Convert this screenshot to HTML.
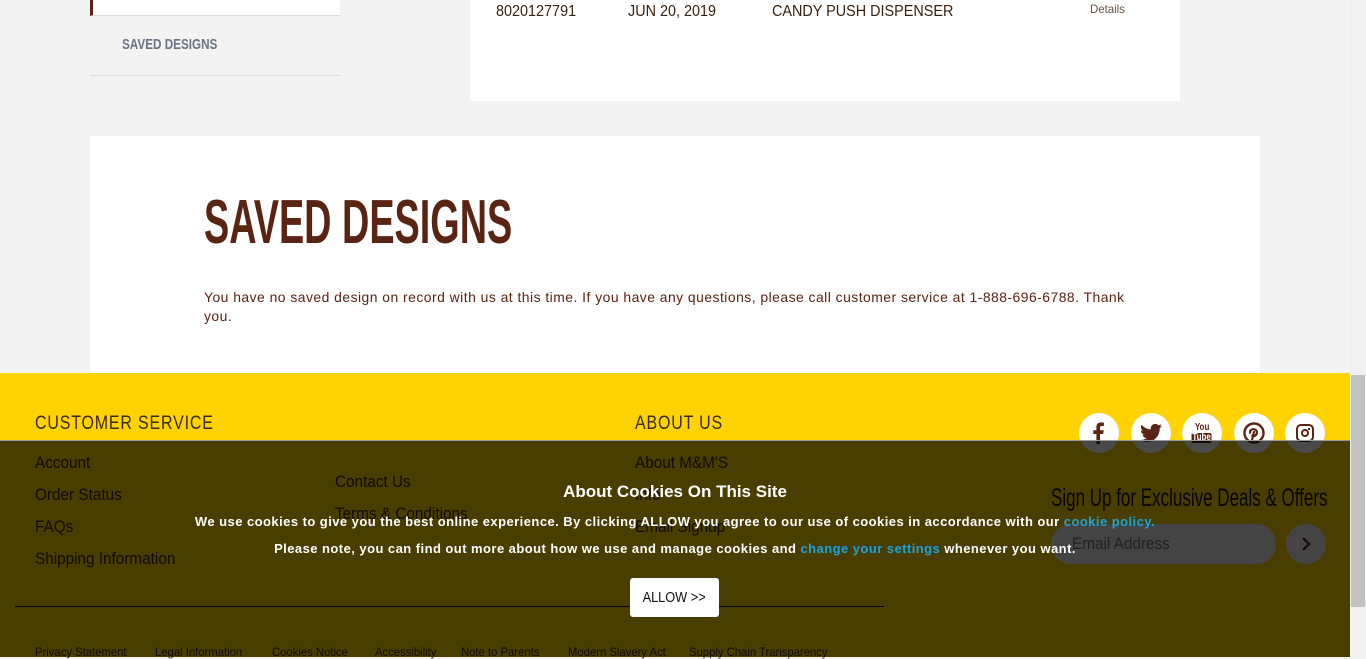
<!DOCTYPE html>
<html><head><meta charset="utf-8"><style>
*{margin:0;padding:0;box-sizing:border-box}
body{width:1366px;height:657px;overflow:hidden;background:#f3f3f3;font-family:"Liberation Sans",sans-serif;position:relative}
.a{position:absolute;white-space:nowrap}
.n{display:inline-block;transform:scaleX(.82);transform-origin:0 0}
.ic{width:40px;height:40px;border-radius:50%;background:#fff;display:flex;align-items:center;justify-content:center}
.fl{position:absolute;top:645px;font-size:12px;color:#3a2a10;white-space:nowrap;transform:scaleX(.94);transform-origin:0 0}
</style></head><body>
<div class="a" style="left:90px;top:0;width:250px;height:16px;background:#fff;border-left:3px solid #5a2413;border-bottom:1px solid #ddd"></div>
<div class="a" style="left:122px;top:36px;font-size:15px;font-weight:bold;color:#6b7480"><span class="n" style="transform:scaleX(.78)">SAVED DESIGNS</span></div>
<div class="a" style="left:90px;top:75px;width:250px;height:1px;background:#ddd"></div>
<div class="a" style="left:470px;top:0;width:710px;height:101px;background:#fff"></div>
<div class="a" style="left:496px;top:3px;font-size:16px;color:#3a2010"><span class="n" style="transform:scaleX(.9)">8020127791</span></div>
<div class="a" style="left:628px;top:3px;font-size:16px;color:#3a2010"><span class="n" style="transform:scaleX(.9)">JUN 20, 2019</span></div>
<div class="a" style="left:772px;top:3px;font-size:16px;color:#3a2010"><span class="n" style="transform:scaleX(.9)">CANDY PUSH DISPENSER</span></div>
<div class="a" style="left:1090px;top:2px;font-size:12px;color:#6b5040;text-decoration:underline"><span class="n" style="transform:scaleX(.95)">Details</span></div>
<div class="a" style="left:90px;top:136px;width:1170px;height:237px;background:#fff"></div>
<div class="a" style="left:204px;top:190px;font-size:62px;font-weight:bold;color:#5a2413;line-height:66px"><span class="n" style="transform:scaleX(.61)">SAVED DESIGNS</span></div>
<div class="a" style="left:204px;top:288px;width:940px;white-space:normal;font-size:13.9px;line-height:19px;color:#5a2413;letter-spacing:.48px">You have no saved design on record with us at this time. If you have any questions, please call customer service at 1-888-696-6788. Thank you.</div>
<div class="a" style="left:0;top:373px;width:1350px;height:284px;background:#ffd200"></div>
<div class="a" style="left:35px;top:413px;font-size:19px;color:#3a2a10;letter-spacing:1px"><span class="n" style="transform:scaleX(.84)">CUSTOMER SERVICE</span></div>
<div class="a" style="left:635px;top:413px;font-size:19px;color:#3a2a10;letter-spacing:1px"><span class="n" style="transform:scaleX(.84)">ABOUT US</span></div>
<div class="a" style="left:35px;top:447px;font-size:17px;color:#3a2a10;line-height:32px"><span class="n" style="transform:scaleX(.9)">Account<br>Order Status<br>FAQs<br>Shipping Information</span></div>
<div class="a" style="left:335px;top:466px;font-size:17px;color:#3a2a10;line-height:32px"><span class="n" style="transform:scaleX(.9)">Contact Us<br>Terms &amp; Conditions</span></div>
<div class="a" style="left:635px;top:447px;font-size:17px;color:#3a2a10;line-height:32px"><span class="n" style="transform:scaleX(.9)">About M&amp;M'S<br>Info<br>Email Signup</span></div>
<div class="a" style="left:1079px;top:413px;width:248px;height:40px">
<div style="display:flex;gap:11.5px">
<div class="ic"><svg width="20" height="22" viewBox="0 0 20 22"><path d="M11 22V12h3.2l.5-3.8H11V5.8c0-1.1.3-1.8 1.9-1.8h2V.6C14.5.5 13.4.4 12.1.4 9.4.4 7.4 2 7.4 5v3.2H4.3V12h3.1v10z" fill="#5a2413"/></svg></div>
<div class="ic"><svg width="22" height="20" viewBox="0 0 24 20"><path d="M24 2.4c-.9.4-1.8.6-2.8.8 1-.6 1.8-1.6 2.2-2.7-1 .6-2 1-3.1 1.2C19.3.7 18 .1 16.6.1c-2.7 0-4.9 2.2-4.9 4.9 0 .4 0 .8.1 1.1C7.7 5.9 4.1 4 1.7 1 1.2 1.8 1 2.6 1 3.5c0 1.7.9 3.2 2.2 4.1-.8 0-1.6-.2-2.2-.6v.1c0 2.4 1.7 4.4 3.9 4.8-.4.1-.8.2-1.3.2-.3 0-.6 0-.9-.1.6 2 2.4 3.4 4.6 3.4-1.7 1.3-3.8 2.1-6.1 2.1-.4 0-.8 0-1.2-.1C2.2 18.8 4.8 19.6 7.5 19.6c9.1 0 14-7.5 14-14v-.6c1-.7 1.8-1.6 2.5-2.6z" fill="#5a2413"/></svg></div>
<div class="ic" style="flex-direction:column;font-weight:bold;color:#5a2413;font-size:10px;line-height:10px"><span style="transform:scaleX(.8)">You</span><span style="background:#5a2413;color:#fff;padding:0 1px;border-radius:2px;transform:scaleX(.8)">Tube</span></div>
<div class="ic"><svg width="22" height="22" viewBox="0 0 22 22"><circle cx="11" cy="11" r="9.5" fill="none" stroke="#5a2413" stroke-width="2.4"/><path d="M9 18l2-8M9.3 13.5c1.2 1 4.6.5 4.6-3 0-2.3-2-3.5-3.8-3.3-2.1.2-3.4 1.7-3 3.6" fill="none" stroke="#5a2413" stroke-width="2.2" stroke-linecap="round"/></svg></div>
<div class="ic"><div style="width:18px;height:18px;border:2px solid #5a2413;border-radius:5px;display:flex;align-items:center;justify-content:center;position:relative"><div style="width:8px;height:8px;border:2px solid #5a2413;border-radius:50%"></div><div style="position:absolute;right:2px;top:2px;width:2px;height:2px;background:#5a2413"></div></div></div>
</div></div>
<div class="a" style="left:1051px;top:484px;font-size:25px;color:#1a1200"><span class="n" style="transform:scaleX(.68)">Sign Up for Exclusive Deals &amp; Offers</span></div>
<div class="a" style="left:1051px;top:524px;width:225px;height:40px;border-radius:20px;background:#e9e9e9;color:#777;font-size:17px;line-height:40px;padding-left:21px"><span class="n" style="transform:scaleX(.9)">Email Address</span></div>
<div class="a" style="left:1286px;top:524px;width:40px;height:40px;border-radius:50%;background:#e9e9e9;display:flex;align-items:center;justify-content:center"><svg width="10" height="16" viewBox="0 0 10 16"><path d="M2 2l6 6-6 6" fill="none" stroke="#3a2a10" stroke-width="2.2"/></svg></div>
<div class="a" style="left:15px;top:606px;width:869px;height:1px;background:#111"></div>
<div class="fl" style="left:35px">Privacy Statement</div>
<div class="fl" style="left:155px">Legal Information</div>
<div class="fl" style="left:272px">Cookies Notice</div>
<div class="fl" style="left:375px">Accessibility</div>
<div class="fl" style="left:461px">Note to Parents</div>
<div class="fl" style="left:568px">Modern Slavery Act</div>
<div class="fl" style="left:689px">Supply Chain Transparency</div>
<div class="a" style="left:0;top:440px;width:1350px;height:217px;background:rgba(0,0,0,.71);border-top:1px solid #999"></div>
<div class="a" style="left:0;top:482px;width:1350px;text-align:center;font-size:17px;font-weight:bold;color:#fff">About Cookies On This Site</div>
<div class="a" style="left:0;top:514px;width:1350px;text-align:center;font-size:13px;font-weight:bold;color:#fff;letter-spacing:.45px">We use cookies to give you the best online experience. By clicking ALLOW you agree to our use of cookies in accordance with our <span style="color:#1fa3dc">cookie policy.</span></div>
<div class="a" style="left:0;top:541px;width:1350px;text-align:center;font-size:13px;font-weight:bold;color:#fff;letter-spacing:.45px">Please note, you can find out more about how we use and manage cookies and <span style="color:#1fa3dc">change your settings</span> whenever you want.</div>
<div class="a" style="left:630px;top:578px;width:89px;height:39px;background:#fff;border-radius:3px;color:#111;font-size:15px;text-align:center;line-height:39px"><span style="display:inline-block;transform:scaleX(.85)">ALLOW &gt;&gt;</span></div>
<div class="a" style="left:1350px;top:0;width:16px;height:657px;background:#f0f0f0"></div>
<div class="a" style="left:1351px;top:375px;width:14px;height:232px;background:#c1c1c1"></div>
</body></html>
